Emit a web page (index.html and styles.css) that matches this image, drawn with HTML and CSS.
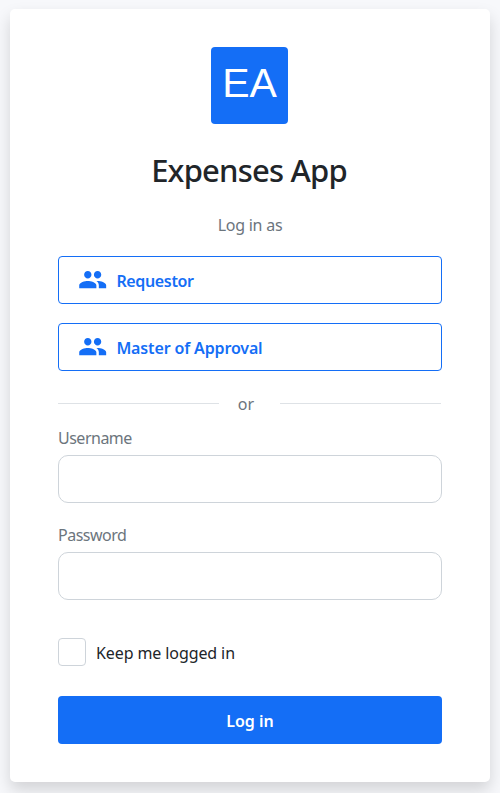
FILE: index.html
```html
<!DOCTYPE html>
<html lang="en">
<head>
<meta charset="utf-8">
<title>Expenses App</title>
<link rel="stylesheet" href="styles.css">
</head>
<body>
<svg class="sprite" aria-hidden="true">
  <symbol id="people" viewBox="0 0 24 24"><path fill="currentColor" d="M16 11c1.66 0 2.99-1.34 2.99-3S17.66 5 16 5c-1.66 0-3 1.34-3 3s1.34 3 3 3zm-8 0c1.66 0 2.99-1.34 2.99-3S9.66 5 8 5C6.34 5 5 6.34 5 8s1.34 3 3 3zm0 2c-2.33 0-7 1.17-7 3.5V19h14v-2.5c0-2.33-4.67-3.5-7-3.5zm8 0c-.29 0-.62.02-.97.05 1.16.84 1.97 1.97 1.97 3.45V19h6v-2.5c0-2.33-4.67-3.5-7-3.5z"/></symbol>
</svg>
<main class="card">
  <div class="logo">EA</div>
  <h1 class="title">Expenses App</h1>
  <p class="hint">Log in as</p>
  <button class="role" type="button"><svg class="icon"><use href="#people"/></svg><span class="requestor">Requestor</span></button>
  <button class="role" type="button"><svg class="icon"><use href="#people"/></svg><span class="master">Master of Approval</span></button>
  <div class="divider"><span>or</span></div>
  <form class="form">
    <label class="label" for="user">Username</label>
    <input class="field" id="user" type="text">
    <label class="label" for="pass">Password</label>
    <input class="field" id="pass" type="password">
    <label class="keep"><input class="check" type="checkbox"><span>Keep me logged in</span></label>
    <button class="submit" type="button">Log in</button>
  </form>
</main>
</body>
</html>
```
FILE: styles.css
```css
* { box-sizing: border-box; }
body {
  margin: 0;
  padding: 9px 10px 0;
  height: 793px;
  overflow: hidden;
  background: #f7f8fb;
  color: #212529;
  font: 16px/24px "Segoe UI", "Noto Sans", "Open Sans", sans-serif;
}
.sprite { display: none; }
.card {
  height: 773px;
  padding: 38px 48px;
  background: #fff;
  border-radius: 5px;
  box-shadow: 0 8px 16px rgba(0, 0, 0, .15);
  display: flex;
  flex-direction: column;
}
.logo {
  width: 77px;
  height: 77px;
  margin-left: 153px;
  border-radius: 4px;
  background: #146ef6;
  color: #fff;
  font: 41px/73px "Liberation Sans", Arial, sans-serif;
  text-align: center;
}
.title {
  margin: 27px 2px 0 0;
  font-size: 31px;
  line-height: 38px;
  font-weight: 500;
  letter-spacing: -.8px;
  text-align: center;
}
.hint {
  margin: 24px 0 19px;
  color: #6c757d;
  font-weight: 400;
  letter-spacing: -.25px;
  text-align: center;
  line-height: 24px;
}
.role {
  height: 48px;
  margin: 0 0 19px;
  padding: 2px 19px 0;
  display: flex;
  align-items: center;
  background: #fff;
  border: 1px solid #146ef6;
  border-radius: 4px;
  color: #146ef6;
  font: inherit;
  font-weight: 600;
}
.icon { width: 29.4px; height: 29.4px; margin: 0 9px 2px 0; }
.requestor { letter-spacing: -.35px; }
.master { letter-spacing: -.14px; }
.divider {
  display: flex;
  align-items: center;
  height: 24px;
  margin: 1px 1px 1px 0;
  color: #6c757d;
}
.divider::before, .divider::after { content: ""; height: 1px; flex: 1; background: #dee2e6; }
.divider span { width: 61px; padding: 2px 7px 0 0; text-align: center; font-weight: 400; }
.form { display: flex; flex-direction: column; margin-top: 9px; }
.label { height: 30px; padding-top: 1px; color: #6c757d; font-weight: 400; letter-spacing: -.5px; }
.field {
  height: 48px;
  margin: 0 0 19px;
  border: 1px solid #ced4da;
  border-radius: 10px;
  font: inherit;
  padding: 0 16px;
}
.keep { display: flex; align-items: center; height: 28px; margin: 19px 0 30px; font-weight: 400; letter-spacing: -.1px; }
.keep span { padding-top: 2px; }
.check {
  appearance: none;
  width: 28px;
  height: 28px;
  margin: 0 10px 0 0;
  border: 1px solid #ced4da;
  border-radius: 4px;
  background: #fff;
}
.submit {
  height: 48px;
  padding: 2px 0 0;
  border: 0;
  border-radius: 4px;
  background: #146ef6;
  color: #fff;
  font: inherit;
  font-weight: 600;
}
```
